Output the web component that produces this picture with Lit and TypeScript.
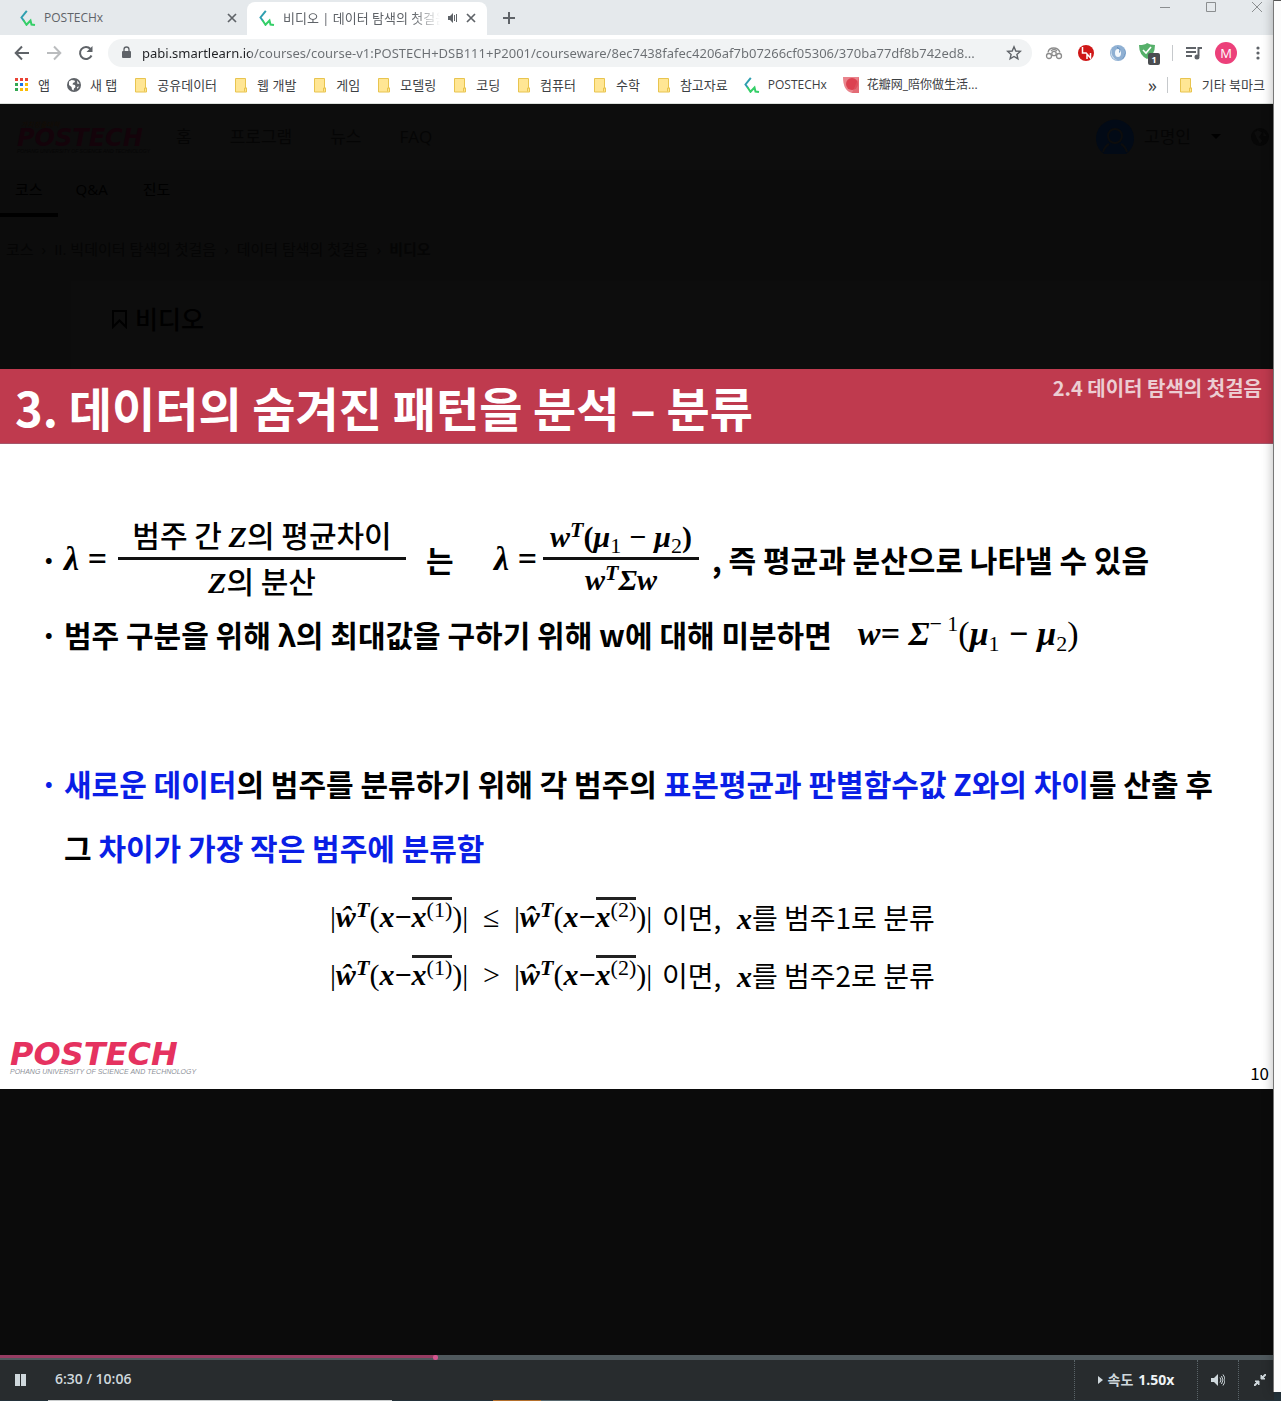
import { LitElement, html, svg, css, nothing } from "lit";
import { customElement, property, state } from "lit/decorators.js";

const swirl = html`<svg class="i16" viewBox="0 0 16 16" fill="none" stroke-width="2">
  <path d="M6.800 0.800 1.500 7.500 4 11" stroke="#2f9fb0" />
  <path d="M3.500 10.300 6.500 14.800 10.500 10.500 11.500 14.500 15 15" stroke="#35cf68" />
</svg>`;

const folder = html`<svg class="i16" viewBox="0 0 16 16">
  <path d="M2.500 1.500h10v9.500h1v4h-11z" fill="#ffe694" stroke="#e8c44f" />
  <path d="M11.500 14.500v-3.500h2" fill="none" stroke="#e8c44f" />
</svg>`;

const globe = html`<svg class="i16" viewBox="0 0 16 16">
  <circle cx="8" cy="8" r="7" fill="#5f6368" />
  <path d="M3 4.500 5.500 3 8.500 3.500 9 5 7 6 6.500 7.500 9 8 9.500 10 8 11.500 7.500 13.500 6 12.500 5.500 10 3 8z M11 3.500 13.500 6.500 11.500 7z M11 10l2-.5-1.500 2.500z" fill="#fff" />
</svg>`;

const apps = html`<svg class="i16" viewBox="0 0 16 16">
  ${["#ea4335", "#ea4335", "#ea4335", "#34a853", "#1a73e8", "#fbbc04", "#34a853", "#fbbc04", "#fbbc04"].map(
    (c, i) => svg`<rect x=${1 + (i % 3) * 5} y=${1 + Math.floor(i / 3) * 5} width="3" height="3" fill=${c} />`
  )}
</svg>`;

const petal = html`<svg class="i16" viewBox="0 0 16 16">
  <path d="M0 0h16v16h-7Q0 14 0 0z" fill="#e9848c" />
  <circle cx="9" cy="7" r="6" fill="#dc4150" />
  <path d="M16 0v16h-7z" fill="#e05a66" opacity=".6" />
</svg>`;

const cross = html`<svg class="i10" viewBox="0 0 10 10" stroke="#5f6368" stroke-width="1.700"><path d="M1 1l8 8M9 1l-8 8" /></svg>`;

const BOOKMARKS = [
  { icon: apps, label: "앱" },
  { icon: globe, label: "새 탭" },
  { icon: folder, label: "공유데이터" },
  { icon: folder, label: "웹 개발" },
  { icon: folder, label: "게임" },
  { icon: folder, label: "모델링" },
  { icon: folder, label: "코딩" },
  { icon: folder, label: "컴퓨터" },
  { icon: folder, label: "수학" },
  { icon: folder, label: "참고자료" },
  { icon: swirl, label: "POSTECHx", small: true },
  { icon: petal, label: "花瓣网_陪你做生活...", small: true },
];

const base = css`
  * { box-sizing: border-box; }
  svg { display: block; flex: none; }
  a { color: inherit; text-decoration: none; }
  button { border: 0; padding: 0; margin: 0; background: none; color: inherit; font: inherit; display: grid; place-items: center; }
  .i16 { width: 16px; height: 16px; }
  .i10 { width: 10px; height: 10px; }
`;

@customElement("browser-chrome")
class BrowserChrome extends LitElement {
  static styles = [base, css`
    :host { display: block; background: #fff; color: #3c4043; font: 12px/16px "Open Sans", "Noto Sans CJK KR", sans-serif; }
    .tabs { display: flex; height: 35px; background: #e5e9ec; color: #5f6368; }
    .tab { display: flex; align-items: center; gap: 8px; width: 240px; padding: 0 11px 0 12px; white-space: nowrap; }
    .tab.first { width: 247px; padding: 0 10px 0 20px; }
    .tab.on { margin-top: 2px; padding-bottom: 2px; background: #fff; border-radius: 8px 8px 0 0; font-size: 13px; }
    .name { flex: 1; min-width: 0; overflow: hidden; }
    .on .name { -webkit-mask-image: linear-gradient(90deg, #000 130px, transparent); mask-image: linear-gradient(90deg, #000 130px, transparent); }
    .plus { width: 44px; }
    .window { display: flex; gap: 36px; margin-left: auto; padding: 2px 12px 0 0; align-items: flex-start; }
    .bar { display: flex; align-items: center; height: 36px; padding-left: 6px; }
    .cell { width: 32px; height: 32px; flex: none; }
    .box { flex: 1; display: flex; align-items: center; height: 28px; margin: 0 6px; padding: 0 10px 0 12px; gap: 10px; border-radius: 14px; background: #f1f3f4; }
    .url { flex: 1; min-width: 0; border: 0; padding: 0; outline: 0; height: 24px; font: 13px "Noto Sans", sans-serif;
      color: transparent; background: linear-gradient(90deg, #202124 108px, #6a6e72 108px); -webkit-background-clip: text; background-clip: text; }
    .sep { width: 1px; height: 16px; background: #c6c9cc; margin: 0 5px 0 6px; }
    .face { width: 22px; height: 22px; border-radius: 11px; background: #ec407a; color: #fff; display: grid; place-items: center; font-size: 13px; }
    .marks { display: flex; align-items: center; gap: 16px; height: 33px; padding: 0 9px 4px 14px; border-bottom: 1px solid #dde1dd; font-size: 13px; white-space: nowrap; }
    .mark { display: flex; align-items: center; gap: 8px; }
    .small { font: 12px/16px "Open Sans", "Noto Sans CJK SC", sans-serif; }
    .more { margin-left: auto; display: flex; align-items: center; gap: 10px; font-size: 18px; }
    .more .sep { margin: 0; }
    .rest { margin-left: -6px; }
  `];

  render() {
    return html`
      <nav class="tabs" aria-label="tabs">
        <div class="tab first">${swirl}<span class="name">POSTECHx</span><button aria-label="close">${cross}</button></div>
        <div class="tab on">${swirl}<span class="name">비디오 | 데이터 탐색의 첫걸음</span>
          <svg class="i10" viewBox="0 0 10 10" fill="#5f6368"><path d="M0 3h2l3-3v10l-3-3h-2zM6 2h1v6h-1zM8 1h1v8h-1z" /></svg>
          <button aria-label="close">${cross}</button></div>
        <button class="plus" aria-label="new tab"><svg width="12" height="12" stroke="#5f6368" stroke-width="2"><path d="M6 0v12M0 6h12" /></svg></button>
        <div class="window">
          <button aria-label="minimize"><svg width="10" height="11" stroke="#8b8e90"><path d="M0 5.500h10" /></svg></button>
          <button aria-label="maximize"><svg width="10" height="11" fill="none" stroke="#8b8e90"><path d="M.5.500h9v9h-9z" /></svg></button>
          <button aria-label="close window"><svg width="10" height="11" stroke="#8b8e90"><path d="M0 0l10 10M10 0l-10 10" /></svg></button>
        </div>
      </nav>
      <div class="bar">
        <button class="cell" aria-label="back"><svg width="16" height="16" fill="none" stroke="#5f6368" stroke-width="2"><path d="M15 8H2M8 1.500 1.700 8 8 14.500" /></svg></button>
        <button class="cell" aria-label="forward"><svg width="16" height="16" fill="none" stroke="#babcbe" stroke-width="2"><path d="M1 8h13M8 1.500 14.300 8 8 14.500" /></svg></button>
        <button class="cell" aria-label="reload"><svg width="16" height="16" fill="none" stroke="#5f6368" stroke-width="2"><path d="M13.500 10.500A6 6 0 1 1 12.500 4" /><path d="M14.500 1v6h-6z" fill="#5f6368" stroke="none" /></svg></button>
        <div class="box">
          <svg width="12" height="14" viewBox="0 0 12 14"><rect x="2" y="5" width="9" height="7" rx="1" fill="#5f6368" /><path d="M4 5.500V3.500a2.500 2.500 0 0 1 5 0v2" fill="none" stroke="#5f6368" stroke-width="1.300" /></svg>
          <input class="url" aria-label="address" .value=${"pabi.smartlearn.io/courses/course-v1:POSTECH+DSB111+P2001/courseware/8ec7438fafec4206af7b07266cf05306/370ba77df8b742ed8..."} />
          <button aria-label="bookmark"><svg width="16" height="16" viewBox="0 0 16 16" fill="none" stroke="#5f6368" stroke-width="1.400"><path d="M8 1.800 9.800 6l4.500.4-3.400 3 1 4.400L8 11.500l-3.900 2.300 1-4.400-3.400-3L6.200 6z" /></svg></button>
        </div>
        <button class="cell" aria-label="extension"><svg width="18" height="14" viewBox="0 0 18 14" fill="none" stroke="#8c8c8c" stroke-width="1.300"><circle cx="4" cy="10" r="2.500" /><circle cx="9" cy="7.500" r="2.200" /><circle cx="14" cy="10" r="2.500" /><path d="M3 6.500C4 .5 13 .5 15 6.500M6 5q3-3 6 0" /></svg></button>
        <button class="cell" aria-label="extension"><svg width="16" height="16"><circle cx="8" cy="8" r="8" fill="#cf1717" /><path d="M4.500 2v6h4M9 14V9l3.500 4V8" fill="none" stroke="#fff" stroke-width="1.500" /></svg></button>
        <button class="cell" aria-label="extension"><svg width="16" height="16"><circle cx="8" cy="8" r="8" fill="#8fb0d3" /><path d="M2 4A7.500 7.500 0 0 0 8 15.500 9 9 0 0 1 2 4z" fill="#d4e2f0" /><path d="M14 3.500A7.500 7.500 0 0 1 12 14 9 9 0 0 0 14 3.500z" fill="#4e7fb3" /><ellipse cx="8" cy="8" rx="3" ry="4" fill="#f4f8fc" /><path d="M7 2.500q4 1 2.500 5" fill="none" stroke="#5888ba" /></svg></button>
        <button class="cell" aria-label="extension"><svg width="24" height="26" viewBox="0 0 24 26"><path d="M1 5q6 0 8-2 3 2 8 2 0 10-8 14Q1 15 1 5z" fill="#56b06a" /><path d="M5 10l3 3 5-6" fill="none" stroke="#fff" stroke-width="1.600" /><rect x="10" y="13" width="12" height="12" rx="2" fill="#4a4d50" /><text x="16" y="22.500" fill="#fff" font-size="9" font-weight="700" text-anchor="middle">1</text></svg></button>
        <span class="sep"></span>
        <button class="cell" aria-label="media"><svg width="16" height="14" fill="none" stroke="#5f6368" stroke-width="2"><path d="M0 2h10M0 6h10M0 10h6M16 2h-3.500v8" /><circle cx="11" cy="11" r="1.500" fill="#5f6368" /></svg></button>
        <button class="cell" aria-label="profile"><span class="face">M</span></button>
        <button class="cell" aria-label="menu"><svg width="4" height="14" fill="#5f6368"><circle cx="2" cy="2" r="1.600" /><circle cx="2" cy="7" r="1.600" /><circle cx="2" cy="12" r="1.600" /></svg></button>
      </div>
      <nav class="marks" aria-label="bookmarks">
        ${BOOKMARKS.map((b) => html`<a class="mark" href="#">${b.icon}<span class=${b.small ? "small" : ""}>${b.label}</span></a>`)}
        <div class="more"><button aria-label="more bookmarks">»</button><span class="sep"></span></div>
        <a class="mark rest" href="#">${folder}<span>기타 북마크</span></a>
      </nav>`;
  }
}

@customElement("postech-logo")
class PostechLogo extends LitElement {
  @property({ type: Boolean }) small = false;
  static styles = css`
    :host { display: block; font-family: "DejaVu Sans", sans-serif; white-space: nowrap; }
    .word { font-size: 32px; line-height: 26px; font-weight: 700; font-style: italic; color: var(--word, #e5325f); }
    .line { font: italic 400 7px/10px "Liberation Sans", sans-serif; color: var(--line, #8d9199); }
    .word.small { font-size: 24px; line-height: 18px; }
    .line.small { font-size: 5px; line-height: 8px; }
    .motto { font: italic 400 7px/10px "Noto Sans CJK KR", sans-serif; color: #140c04; padding-left: 4px; }
  `;
  render() {
    const s = this.small ? "small" : "";
    return html`${this.small ? html`<div class="motto">가치창출대학</div>` : nothing}
      <div class="word ${s}">POSTECH</div><div class="line ${s}">POHANG UNIVERSITY OF SCIENCE AND TECHNOLOGY</div>`;
  }
}

@customElement("dimmed-course")
class DimmedCourse extends LitElement {
  static styles = [base, css`
    :host { display: block; background: #0c0c0c; color: #050505; font: 16px/24px "Open Sans", "Noto Sans CJK KR", sans-serif; overflow: hidden; }
    .top { display: flex; align-items: center; height: 66px; padding: 0 5px 0 17px; background: #0d0d0d; font-size: 17px; }
    .logo { --word: #14030a; --line: #060606; width: 159px; }
    .menu { display: flex; gap: 38px; }
    .user { margin-left: auto; display: flex; align-items: center; gap: 10px; }
    .caret { margin: 0 20px 0 10px; }
    .sub { display: flex; height: 47px; font-size: 15px; color: #000; }
    .sub a { padding: 7px 15px 0; border-bottom: 4px solid transparent; margin-right: 5px; }
    .sub a.on { border-color: #000; margin-right: 3px; }
    .crumbs { display: flex; gap: 8px; padding: 20px 6px; font-size: 15px; color: #050505; }
    .strong { font-weight: 700; }
    .card { margin-left: 71px; background: #0d0d0d; padding: 20px 40px 44px; min-height: 90px; }
    .title { display: flex; align-items: center; gap: 7px; margin: 0; font-size: 25px; line-height: 36px; font-weight: 500; color: #000; }
  `];
  render() {
    return html`
      <header class="top">
        <postech-logo class="logo" small></postech-logo>
        <nav class="menu"><a href="#">홈</a><a href="#">프로그램</a><a href="#">뉴스</a><a href="#">FAQ</a></nav>
        <div class="user">
          <svg width="38" height="36" viewBox="0 0 38 36" fill="none"><path d="M8 35A19 19 0 1 1 30 35z" fill="#020a16" /><circle cx="19" cy="17" r="7" stroke="#0d0d0d" stroke-width="2" /><path d="M7 33q2-6 6-8M31 33q-2-6-6-8" stroke="#0d0d0d" stroke-width="2" /></svg>
          <span>고명인</span>
          <svg class="caret" width="10" height="6"><path d="M0 0h10l-5 5z" fill="#000" /></svg>
          <svg width="18" height="18" viewBox="0 0 16 16"><circle cx="8" cy="8" r="8" fill="#070707" /><path d="M3 4 6 2l4 2-3 4 3 3-2 3-3-5zM11 3l3 4-3 0z" fill="#0d0d0d" /></svg>
        </div>
      </header>
      <nav class="sub"><a class="on" href="#">코스</a><a href="#">Q&amp;A</a><a href="#">진도</a></nav>
      <nav class="crumbs"><a href="#">코스</a><span>›</span><a href="#">II. 빅데이터 탐색의 첫걸음</a><span>›</span><a href="#">데이터 탐색의 첫걸음</a><span>›</span><span class="strong">비디오</span></nav>
      <section class="card"><h2 class="title"><svg width="17" height="20" fill="none" stroke="#000" stroke-width="2"><path d="M2 2h13v16l-6.500-6.500L2 18z" /></svg>비디오</h2></section>`;
  }
}

@customElement("lecture-slide")
class LectureSlide extends LitElement {
  static styles = [base, css`
    :host { display: flex; flex-direction: column; min-height: 720px; background: #fff; color: #000; font: 700 30px/64px "Noto Sans CJK KR", sans-serif; white-space: nowrap; }
    .band { display: flex; justify-content: space-between; height: 75px; padding: 0 12px 0 15px; background: #bf3a4e; border-bottom: 1px solid #a4566a; color: #fff; }
    .head { margin: 0; font-size: 47px; line-height: 76px; }
    .chapter { font-size: 20px; line-height: 38px; color: #eccdd2; }
    .blue { color: #0a1ee6; }
    .row { display: grid; grid-template-columns: 19px 1fr; padding-left: 45px; }
    .formula { display: grid; grid-template-columns: 19px 54px 288px 88px 49px 156px 1fr; align-items: center; height: 88px; margin-top: 70px; padding-left: 45px; }
    .bul { font-size: 20px; }
    .wide { display: flex; gap: 26px; }
    .later { margin-top: 85px; }
    .frac { display: grid; justify-items: center; line-height: 40px; font-weight: 500; }
    .num { width: 100%; text-align: center; border-bottom: 3px solid #111; }
    .mid { padding-left: 20px; }
    .tail { padding-left: 13px; }
    .m { font-family: "Liberation Serif", "Noto Sans CJK KR", serif; font-style: italic; font-weight: 700; }
    .r { font-style: normal; }
    .light { font-weight: 400; }
    sup, sub { font-size: 22px; line-height: 0; }
    sup { vertical-align: 10px; }
    sub { vertical-align: -6px; font-style: normal; font-weight: 400; }
    .inv { font-size: 34px; }
    .inv sup { vertical-align: 14px; }
    .eqs { padding: 10px 0 0 330px; font-size: 28px; line-height: 56px; font-weight: 400; }
    .eq { display: grid; grid-template-columns: 153px 31px 148px 75px 1fr; }
    .eq .m { font-size: 30px; }
    .bar { display: inline-block; border-top: 3px solid #222; line-height: 34px; }
    .foot { display: flex; justify-content: space-between; align-items: flex-end; margin-top: auto; padding: 0 5px 6px 10px; }
    .logo { margin-bottom: 6px; }
    .page { font-size: 17px; line-height: 20px; font-weight: 400; }
  `];

  private abs(n: number) {
    return html`<span class="m"><span class="r light">|</span>ŵ<sup>T</sup><span class="r light">(</span>x<span class="r">−</span><span class="bar">x<sup class="r light">(${n})</sup></span><span class="r light">)|</span></span>`;
  }

  private eq(op: string, n: number) {
    return html`<div class="eq">${this.abs(1)}<span class="m r light">${op}</span>${this.abs(2)}<span>이면,</span><span><span class="m">x</span>를 범주${n}로 분류</span></div>`;
  }

  render() {
    return html`
      <header class="band"><h1 class="head">3. 데이터의 숨겨진 패턴을 분석 – 분류</h1><span class="chapter">2.4 데이터 탐색의 첫걸음</span></header>
      <div class="formula">
        <span class="bul">•</span><span class="m inv">λ =</span>
        <span class="frac"><span class="num">범주 간 <span class="m">Z</span>의 평균차이</span><span><span class="m">Z</span>의 분산</span></span>
        <span class="mid">는</span><span class="m inv">λ =</span>
        <span class="frac"><span class="num m">w<sup>T</sup><span class="r">(</span>μ<sub>1</sub> − μ<sub>2</sub><span class="r">)</span></span><span class="m">w<sup>T</sup>Σw</span></span>
        <span class="tail">, 즉 평균과 분산으로 나타낼 수 있음</span>
      </div>
      <div class="row"><span class="bul">•</span><span class="wide"><span>범주 구분을 위해 λ의 최대값을 구하기 위해 w에 대해 미분하면</span>
        <span class="m inv">w= Σ<sup class="r light">− 1</sup><span class="r light">(</span>μ<sub>1</sub> − μ<sub>2</sub><span class="r light">)</span></span></span></div>
      <div class="row later"><span class="bul blue">•</span><span><span class="blue">새로운 데이터</span>의 범주를 분류하기 위해 각 범주의 <span class="blue">표본평균과 판별함수값 Z와의 차이</span>를 산출 후<br />그 <span class="blue">차이가 가장 작은 범주에 분류함</span></span></div>
      <div class="eqs">${this.eq("≤", 1)}${this.eq(">", 2)}</div>
      <footer class="foot"><postech-logo class="logo"></postech-logo><span class="page">10</span></footer>`;
  }
}

@customElement("player-bar")
class PlayerBar extends LitElement {
  @state() private position = 390;
  private readonly duration = 1143;

  static styles = [base, css`
    :host { display: block; background: #282c2e; color: #cfd8dc; font: 600 14px/20px "Open Sans", "Noto Sans CJK KR", sans-serif; }
    .seek { display: block; appearance: none; -webkit-appearance: none; width: 100%; height: 5px; margin: 0; background: #4f595d; }
    .seek::-webkit-slider-runnable-track { height: 5px; background: linear-gradient(#963d63, #963d63) 0 0 / var(--done) 3px no-repeat; }
    .seek::-webkit-slider-thumb { -webkit-appearance: none; width: 5px; height: 5px; border-radius: 2px; background: #d4568e; }
    .controls { display: flex; height: 40px; }
    .play { width: 41px; }
    .time { flex: 1; padding: 9px 14px; }
    .cell { border-left: 1px dotted #5a6468; width: 41px; }
    .speed { width: 123px; display: flex; align-items: center; justify-content: center; gap: 5px; }
    .rate { font-weight: 700; color: #eef3f5; }
    .full { width: 36px; padding-left: 6px; }
    .desk { display: grid; grid-template-columns: 48px 344px 101px 48px 49px 1fr; height: 1px; background: #24323a; }
    .a { grid-column: 2; background: #c9cccd; }
    .b { grid-column: 4; background: #b5702c; }
    .c { background: #58686e; }
  `];

  render() {
    return html`
      <input class="seek" type="range" min="0" max=${this.duration} .value=${String(this.position)} aria-label="재생 위치"
        style="--done:${(this.position / this.duration) * 100}%"
        @input=${(e: Event) => (this.position = Number((e.target as HTMLInputElement).value))} />
      <div class="controls">
        <button class="play" aria-label="pause"><svg width="11" height="12" fill="#cfd8dc"><path d="M0 0h5v12H0zM6 0h5v12H6z" /></svg></button>
        <span class="time">6:30 / 10:06</span>
        <button class="cell speed"><svg width="5" height="8" fill="#cfd8dc"><path d="M0 0l5 4-5 4z" /></svg><span>속도</span><span class="rate">1.50x</span></button>
        <button class="cell" aria-label="volume"><svg width="14" height="12" fill="#cfd8dc"><path d="M0 4h3l4-4v12L3 8H0z" /><path d="M9 3.500q2 2.500 0 5M10.500 2q3 4 0 8M12 .5q4 5.500 0 11" fill="none" stroke="#cfd8dc" /></svg></button>
        <button class="cell full" aria-label="exit full screen"><svg width="12" height="12" fill="#cfd8dc" stroke="#cfd8dc"><path d="M7 1v4h4zM1 7h4v4z" /><path d="M8 4l4-4M4 8l-4 4" stroke-width="2" /></svg></button>
      </div>
      <div class="desk"><span class="a"></span><span class="b"></span><span class="c"></span></div>`;
  }
}

@customElement("app-root")
class AppRoot extends LitElement {
  static styles = css`
    :host { display: flex; min-height: 100vh; background: #0b0b0b; }
    .window { flex: 1; min-width: 0; display: flex; flex-direction: column; }
    .above, .below { flex: 1 1 0; }
    .below { background: #0b0b0b; border-top: 1px solid #0b0b0b; }
    .side { position: relative; width: 7px; display: flex; flex-direction: column; background: #24323a; }
    .edge { flex: 1; margin-bottom: 9px; background: #fcfcfc; border-top: 1px solid #555; box-shadow: -1px 0 0 #777, 0 0 12px rgba(0, 0, 0, 0.4); }
  `;
  render() {
    return html`
      <main class="window">
        <browser-chrome></browser-chrome>
        <dimmed-course class="above"></dimmed-course>
        <lecture-slide></lecture-slide>
        <div class="below"></div>
        <player-bar></player-bar>
      </main>
      <aside class="side"><div class="edge"></div></aside>`;
  }
}
